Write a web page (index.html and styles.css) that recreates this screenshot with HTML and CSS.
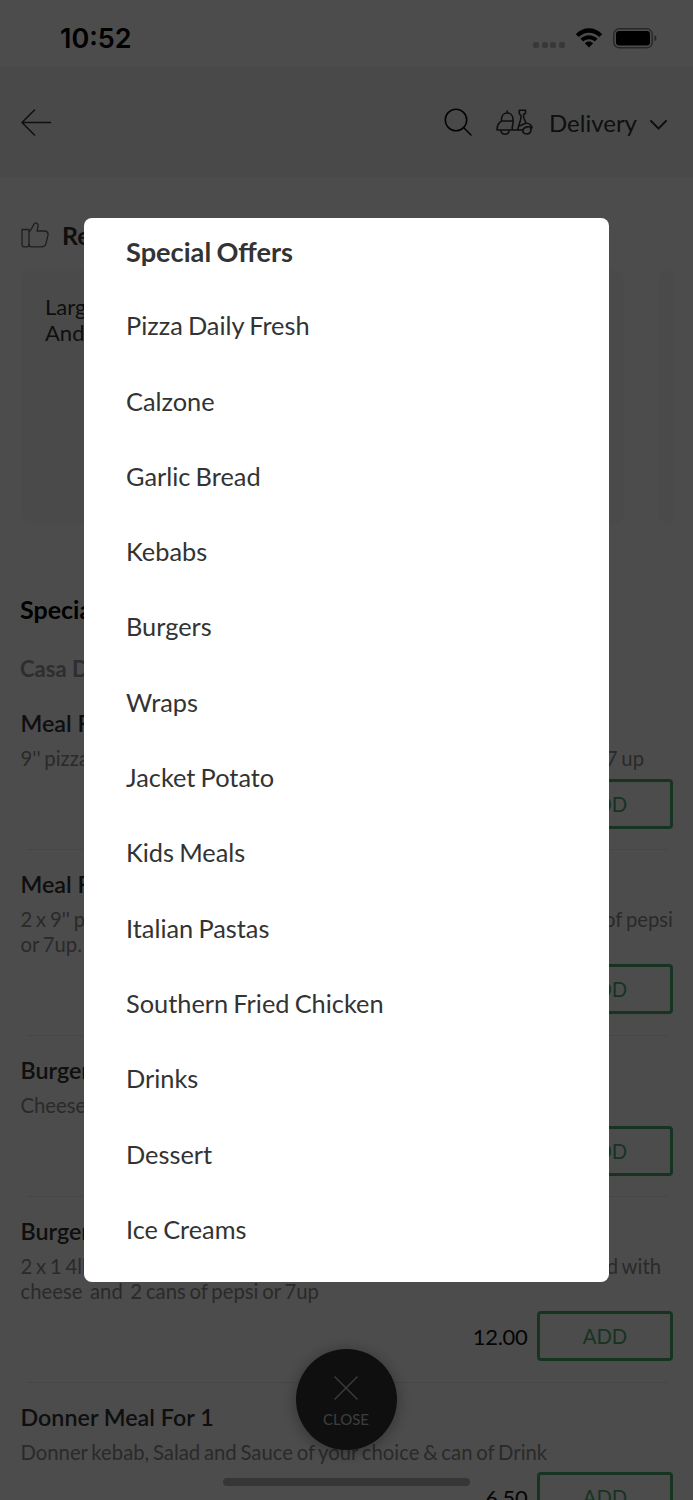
FILE: index.html
```
<!DOCTYPE html>
<html lang="en">
<head>
<meta charset="utf-8">
<title>Menu categories</title>
<link rel="stylesheet" href="styles.css">
</head>
<body>
<div class="screen">
  <div class="status">
    <span class="time">10:52</span>
    <div class="indicators">
      <span class="dots"><i></i><i></i><i></i><i></i></span>
      <svg class="wifi" width="28" height="22" viewBox="0 0 28 22"><path d="M0.8 7.2C8.2-.7 19.8-.7 27.2 7.2L24.2 10.1C18.5 4.2 9.5 4.2 3.8 10.1Z"/><path d="M5.4 11.8C10.2 6.9 17.8 6.9 22.6 11.8L19.7 14.6C16.5 11.5 11.5 11.5 8.3 14.6Z"/><path d="M9.9 16.2C12.2 14 15.8 14 18.1 16.2L14 20.4Z"/></svg>
      <svg class="battery" width="44" height="21" viewBox="0 0 44 21"><rect x=".8" y=".8" width="38.4" height="19" rx="5.5" fill="none" stroke="#888" stroke-width="1.5"/><rect x="3" y="3" width="34" height="14.5" rx="3.2"/><path d="M41.3 7Q43.5 8 43.5 10.3T41.3 13.6Z" fill="#888"/></svg>
    </div>
  </div>
  <header class="header">
    <svg class="back" width="32" height="28" viewBox="0 0 32 28"><path d="M14.500 2 2 14.500 14.500 27M2 14.500H30.500"/></svg>
    <div class="actions">
      <svg class="search" width="28" height="28" viewBox="0 0 28 28"><circle cx="12" cy="12" r="10.7"/><path d="M19.5 19.5 27 27"/></svg>
      <svg class="scooter" width="37" height="28" viewBox="0 0 37 28"><path d="M5.500 12V10.500C5.500 6.500 8 4 11.200 4S17 6.500 17 10.500V12ZM11.200 4V2M5.500 12C3 13.500 1 17.500 1 21H27M17 12C17.800 15 15.200 18 16.500 21M4.800 21C5 24 6.500 25.200 9 25.200S13 24 13.300 21M23.300 1.300H29.500V4.300L27.500 5.500C27 9 29 11.500 30 14 33 14.500 36 16.500 36 19 33 16.800 28.500 17.500 26.500 21M23.300 1.300V4.500L25 7C25.500 11 23 14 21.800 21M30 14 24 16.800"/><path d="M26.500 21A4.300 4.300 0 0 0 35 21.500L34.500 18.500"/></svg>
      <span class="mode">Delivery</span>
      <svg class="chevron" width="17" height="10" viewBox="0 0 17 10"><path d="M1 1 8.500 8.500 16 1"/></svg>
    </div>
  </header>
  <section class="recommended">
    <h2 class="rec-title"><svg class="thumb" width="28" height="26" viewBox="0 0 28 26"><path d="M1 7.500H8V23Q8 24.800 6 24.800H3Q1 24.800 1 22.500Z"/><path d="M8 10C11 8 11 4 13.500 1.500 15.500-.2 17.500 2 17 4.500L16 9H24Q27.500 9.500 27 13L25 21.500Q24 24.800 20.500 24.800H11Q8 24.800 8 22.500"/></svg>Recommended</h2>
    <div class="cards"><div class="card">Large Pizza<br>And Sides</div><div class="card next"></div></div>
  </section>
  <h2 class="section-title">Special Offers</h2>
  <h3 class="deal-title">Casa Deals</h3>
  <div class="items">
    <article class="item"><h4>Meal For 1</h4><p class="desc split"><span>9'' pizza</span><span class="inset1">7 up</span></p><div class="buy"><button>ADD</button></div></article>
    <article class="item"><h4>Meal For 2</h4><p class="desc split"><span>2 x 9'' pizza</span><span>of pepsi</span></p><p class="desc">or 7up.</p><div class="buy"><button>ADD</button></div></article>
    <article class="item"><h4>Burger Meal</h4><p class="desc">Cheese</p><div class="buy"><button>ADD</button></div></article>
    <article class="item"><h4>Burger Meal</h4><p class="desc split"><span>2 x 1 4lb</span><span class="inset2">served with</span></p><p class="desc">cheese&nbsp; and&nbsp; 2 cans of pepsi or 7up</p><div class="buy"><span class="price">12.00</span><button>ADD</button></div></article>
    <article class="item"><h4>Donner Meal For 1</h4><p class="desc">Donner kebab, Salad and Sauce of your choice &amp; can of Drink</p><div class="buy"><span class="price">6.50</span><button>ADD</button></div></article>
  </div>
  <div class="close"><svg width="26" height="26" viewBox="0 0 26 26"><path d="M1.500 1.500 24.500 24.500M24.500 1.500 1.500 24.500"/></svg><span>CLOSE</span></div>
  <div class="home-bar"></div>
  <div class="scrim"></div>
  <nav class="modal">
    <a class="active">Special Offers</a><a>Pizza Daily Fresh</a><a>Calzone</a><a>Garlic Bread</a><a>Kebabs</a><a>Burgers</a><a>Wraps</a><a>Jacket Potato</a><a>Kids Meals</a><a>Italian Pastas</a><a>Southern Fried Chicken</a><a>Drinks</a><a>Dessert</a><a>Ice Creams</a>
  </nav>
</div>
</body>
</html>
```
FILE: styles.css
```
* { box-sizing: border-box; margin: 0; padding: 0; }
body { font-family: Lato, sans-serif; color: #333; background: #fff; }
.screen { position: relative; width: 693px; height: 1500px; overflow: hidden; background: #fff; }
svg { display: block; flex: none; }
.status { height: 67px; display: flex; justify-content: space-between; padding: 0 36px 0 60px; color: #000; }
.time { font: 600 27px/34px Inter, sans-serif; padding-top: 22px; }
.indicators { display: flex; padding-top: 27px; }
.dots { display: flex; gap: 2.600px; padding-top: 15px; margin-right: 10px; }
.dots i { width: 6px; height: 6px; border-radius: 2px; background: #bdbdbd; }
.battery { margin: 1px 0 0 10px; }
.header { height: 110px; background: #f6f6f6; display: flex; align-items: center; justify-content: space-between; padding: 0 26px 0 20px; }
.header svg, .thumb { fill: none; stroke: #333; stroke-width: 1.600; stroke-linecap: round; stroke-linejoin: round; }
.actions { display: flex; align-items: center; }
.header .search { stroke: #111; margin: 0 24px 0 0; }
.header .scooter { margin-top: 2px; }
.mode { font-size: 24px; line-height: 30px; margin: 2px 13px 0 16px; }
.header .chevron { margin-top: 5px; stroke-width: 2; }
.recommended { height: 407px; padding: 42px 0 0 21px; }
.rec-title { display: flex; align-items: center; gap: 13px; height: 32px; font-size: 25px; }
.recommended .thumb { stroke: #666; stroke-width: 1.300; }
.cards { display: flex; gap: 34px; margin-top: 18px; }
.card { width: 603px; height: 255px; flex: none; border-radius: 10px; background: #f9f9f9; padding: 25px 24px; font-size: 22px; line-height: 26px; }
.next { width: 15px; border-radius: 10px 0 0 10px; padding: 0; }
.section-title { height: 52px; padding-left: 20px; font-size: 25px; line-height: 51px; color: #000; }
.deal-title { height: 53px; padding-left: 20px; font-size: 22px; line-height: 65px; color: #999; }
.items { padding: 0 20px 0 20.500px; }
.item { padding: 21px 0 21.100px; position: relative; }
.item::after { content: ""; position: absolute; left: 6px; right: 6px; bottom: 0; height: 1px; background: #ebebeb; }
.item h4 { font-size: 23.300px; line-height: 27.500px; font-weight: 600; margin-bottom: 8.700px; }
.desc { font-size: 20.300px; line-height: 24.300px; height: 24.300px; word-spacing: -1.400px; color: #8c8c8c; white-space: nowrap; }
.split { display: flex; justify-content: space-between; }
.inset1 { padding-right: 29px; }
.inset2 { padding-right: 12px; }
.buy { display: flex; justify-content: flex-end; align-items: center; gap: 9.500px; margin-top: 7.700px; height: 51px; }
.price { font-size: 22px; letter-spacing: -.3px; color: #111; }
.buy button { width: 136px; height: 50px; border: 3px solid #4bb070; border-radius: 4px; background: none; font: 20.300px Lato, sans-serif; color: #4bb070; }
.close { position: absolute; left: 296px; top: 1349px; width: 101px; height: 101px; border-radius: 50%; background: #333; color: #ccc; display: flex; flex-direction: column; align-items: center; padding: 25.500px 1px 0 0; gap: 9px; font-size: 15px; line-height: 18px; box-shadow: 0 2px 16px rgba(0,0,0,.35); }
.close svg { fill: none; stroke: #ccc; stroke-width: 1.300; }
.home-bar { position: absolute; left: 223px; top: 1478px; width: 247px; height: 8px; border-radius: 4px; background: #b5b5b5; }
.scrim { position: absolute; inset: 0; background: rgba(0,0,0,.7); }
.modal { position: absolute; left: 84px; top: 218px; width: 525px; height: 1064px; border-radius: 8px; background: #fff; padding: 0 42px; overflow: hidden; }
.modal a { display: block; height: 75.300px; line-height: 75.300px; font-size: 25.350px; word-spacing: -1.300px; }
.modal .active { height: 70.300px; line-height: 67px; font-size: 27.200px; font-weight: 700; }
```
